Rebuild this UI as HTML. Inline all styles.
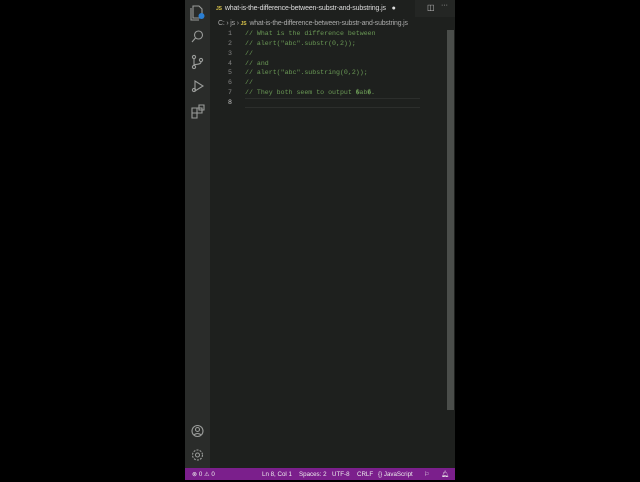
<!DOCTYPE html>
<html><head><style>
body{margin:0;width:640px;height:480px;background:#000;position:relative;overflow:hidden;font-family:"Liberation Sans",sans-serif}
#w{position:absolute;left:185px;top:0;width:270px;height:480px;background:#1e201e}
#ab{position:absolute;left:0;top:0;width:25px;height:468px;background:#2a2c2a}
#tabs{position:absolute;left:25px;top:0;width:245px;height:17px;background:#242624}
#tab{position:absolute;left:0;top:0;height:17px;width:205px;background:#1e201e;color:#ddd;font-size:7px;line-height:18px;padding-left:6px;box-sizing:border-box;letter-spacing:-0.15px}
.js{color:#d8c24a;font-weight:bold;font-size:5px;margin-right:3px}
#bc{position:absolute;left:33px;top:17px;height:12px;line-height:13px;font-size:6.9px;color:#aaa;letter-spacing:-0.15px}
.code{position:absolute;left:25px;top:29px;width:222px;font-family:"Liberation Mono",monospace;font-size:6.6px;color:#6a9955}
.ln{position:absolute;left:0;width:22px;text-align:right;color:#858585}
.l{position:absolute;height:10px;line-height:10px;left:0;width:222px}
.t{position:absolute;left:35px;white-space:pre}
.r{font-family:"DejaVu Sans Mono",monospace;font-size:6px}
#cur{position:absolute;left:35px;top:69px;width:175px;height:8px;border-top:1px solid #2c2e2c;border-bottom:1px solid #2c2e2c}
#sb{position:absolute;left:262px;top:30px;width:7px;height:380px;background:#4a4d4a}
#st{position:absolute;left:0;top:468px;width:270px;height:12px;background:#7b1f8c;color:#eee;font-size:6.2px;line-height:14px}
#st span{position:absolute}
</style></head><body>
<div id="w">
<div id="ab">
<svg width="25" height="468" fill="none" stroke="#9a9c9a" stroke-width="1.1">
<path d="M8 6h6l3 3v9H8zM6 8v12h8"/><circle cx="16.5" cy="16" r="3" fill="#2a7fd4" stroke="none"/>
<circle cx="13.5" cy="35" r="4"/><path d="M10.5 38l-3.5 4"/>
<circle cx="9" cy="57" r="1.6"/><circle cx="9" cy="67" r="1.6"/><circle cx="16" cy="60" r="1.6"/><path d="M9 59v6M16 62c0 3-7 2-7 3"/>
<path d="M10 81l8 5-8 5z"/><circle cx="9" cy="90" r="1.6"/>
<path d="M7 108h5v5H7zM12 108h5v5h-5zM7 113h5v5H7zM14 105h5v5h-5z"/>
<circle cx="12.5" cy="431" r="5.5"/><circle cx="12.5" cy="429.5" r="2"/><path d="M9 435c2-2 5-2 7 0"/>
<circle cx="12.5" cy="455" r="2"/><circle cx="12.5" cy="455" r="5" stroke-dasharray="2 1.2"/>
</svg></div>
<div id="tabs"><div id="tab"><span class="js">JS</span>what-is-the-difference-between-substr-and-substring.js <span style="color:#ddd;font-size:7px;margin-left:4px">●</span></div>
<span style="position:absolute;left:217px;top:3px;color:#bbb;font-size:8px">◫</span><span style="position:absolute;left:231px;top:2px;color:#bbb;font-size:7px">···</span></div>
<div id="bc">C: › js › <span class="js">JS</span>what-is-the-difference-between-substr-and-substring.js</div>
<div class="code">
<div id="cur"></div>
<div class="l" style="top:0"><span class="ln">1</span><span class="t">// What is the difference between</span></div>
<div class="l" style="top:10px"><span class="ln">2</span><span class="t">// alert("abc".substr(0,2));</span></div>
<div class="l" style="top:20px"><span class="ln">3</span><span class="t">//</span></div>
<div class="l" style="top:30px"><span class="ln">4</span><span class="t">// and</span></div>
<div class="l" style="top:39px"><span class="ln">5</span><span class="t">// alert("abc".substring(0,2));</span></div>
<div class="l" style="top:49px"><span class="ln">6</span><span class="t">//</span></div>
<div class="l" style="top:59px"><span class="ln">7</span><span class="t">// They both seem to output <span class="r">�</span>ab<span class="r">�</span>.</span></div>
<div class="l" style="top:69px"><span class="ln" style="color:#ccc">8</span></div>
</div>
<div id="sb"></div>
<div id="st"><span style="left:7px">⊗ 0 ⚠ 0</span><span style="left:77px">Ln 8, Col 1</span><span style="left:114px">Spaces: 2</span><span style="left:147px">UTF-8</span><span style="left:172px">CRLF</span><span style="left:193px">{} JavaScript</span><span style="left:239px">⚐</span><span style="left:256px">🔔︎</span></div>
</div>
</body></html>
